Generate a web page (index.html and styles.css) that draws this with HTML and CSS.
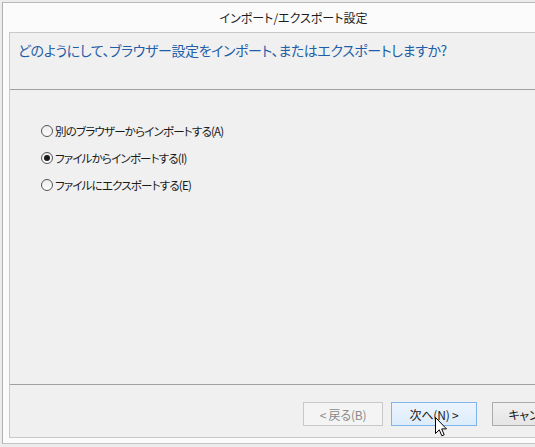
FILE: index.html
```html
<!DOCTYPE html>
<html lang="ja">
<head>
  <meta charset="UTF-8" />
  <title>インポート/エクスポート設定</title>
  <link rel="stylesheet" href="styles.css">
</head>
<body>
  <div class="window">
    <div class="titlebar">インポート/エクスポート設定</div>

    <div class="panel">
      <div class="instruction">どのようにして、ブラウザー設定をインポート、またはエクスポートしますか?</div>

      <div class="options">
        <label class="option"><input type="radio" name="mode"> 別のブラウザーからインポートする(A)</label>
        <label class="option"><input type="radio" name="mode" checked> ファイルからインポートする(I)</label>
        <label class="option"><input type="radio" name="mode"> ファイルにエクスポートする(E)</label>
      </div>

      <div class="footer">
        <button class="btn" disabled>&lt; 戻る(B)</button>
        <button class="btn hover">次へ(N) &gt;</button>
        <button class="btn cancel">キャンセル</button>
        <!-- マウスカーソル -->
        <svg class="cursor" width="12" height="20" viewBox="0 0 12 20">
          <path d="M0.5 0.5 L0.5 16.5 L4.3 12.8 L6.8 18.8 L9.2 17.8 L6.7 11.9 L11.5 11.9 Z" fill="#fff" stroke="#000" stroke-width="1" stroke-linejoin="miter"/>
        </svg>
      </div>
    </div>
  </div>
</body>
</html>
```

FILE: styles.css
```css
body {
  margin: 0;
  background-color: #ececec;
  font-family: 'Noto Sans CJK JP', 'Noto Sans', sans-serif;
  font-feature-settings: "palt";
  overflow: hidden;
  width: 535px;
  height: 447px;
}
.window {
  margin: 2px 0 0 2px;
  width: 590px;
  height: 442px;
  background-color: #fbfbfb;
  border-top: 1px solid #b8b8b8;
  border-left: 1px solid #b0b0b0;
  border-bottom: 1px solid #c4c4c4;
  box-sizing: border-box;
}
.titlebar {
  height: 29px;
  line-height: 30px;
  padding-right: 8px;
  text-align: center;
  font-size: 12px;
  color: #1e1e1e;
}
.panel {
  margin-left: 6px;
  height: 406px;
  background-color: #f0f0f0;
  border: 1px solid #c9c9c9;
  border-right: none;
  box-sizing: border-box;
  display: flex;
  flex-direction: column;
}
.instruction {
  height: 57px;
  padding: 7px 0 0 8px;
  box-sizing: border-box;
  font-size: 14px;
  letter-spacing: -0.4px;
  color: #1f5ea8;
  border-bottom: 1px solid #a0a0a0;
}
.options {
  flex: 1;
  padding: 27px 0 0 31px;
  display: flex;
  flex-direction: column;
  border-bottom: 1px solid #a0a0a0;
}
.option {
  display: flex;
  align-items: center;
  height: 27px;
  font-size: 11.5px;
  letter-spacing: -0.8px;
  color: #1a1a1a;
}
.option input {
  appearance: none;
  width: 12px;
  height: 12px;
  margin: 0 2px 0 0;
  border: 1px solid #555;
  border-radius: 50%;
  background: linear-gradient(#ececec, #fdfdfd);
  box-sizing: border-box;
  display: grid;
  place-items: center;
}
.option input:checked::after {
  content: "";
  width: 6px;
  height: 6px;
  border-radius: 50%;
  background-color: #1b1b1b;
}
.footer {
  position: relative;
  height: 52px;
  padding: 17px 0 0 293px;
  box-sizing: border-box;
  display: flex;
  align-items: flex-start;
}
.btn {
  flex-shrink: 0;
  height: 24px;
  width: 86px;
  margin-right: 15px;
  padding: 0;
  font-family: inherit;
  font-feature-settings: "palt";
  font-size: 12px;
  letter-spacing: -0.2px;
  color: #1a1a1a;
  background: linear-gradient(#f0f0f0, #e5e5e5);
  border: 1px solid #acacac;
  box-sizing: border-box;
}
.btn:disabled {
  width: 80px;
  margin-right: 8px;
  color: #8a8a8a;
  background: #f4f4f4;
  border-color: #c9c9c9;
}
.btn.hover {
  background: linear-gradient(#ecf4fc, #dcecfc);
  border-color: #7eb4ea;
}
.cursor {
  position: absolute;
  left: 425px;
  top: 32px;
}
```
